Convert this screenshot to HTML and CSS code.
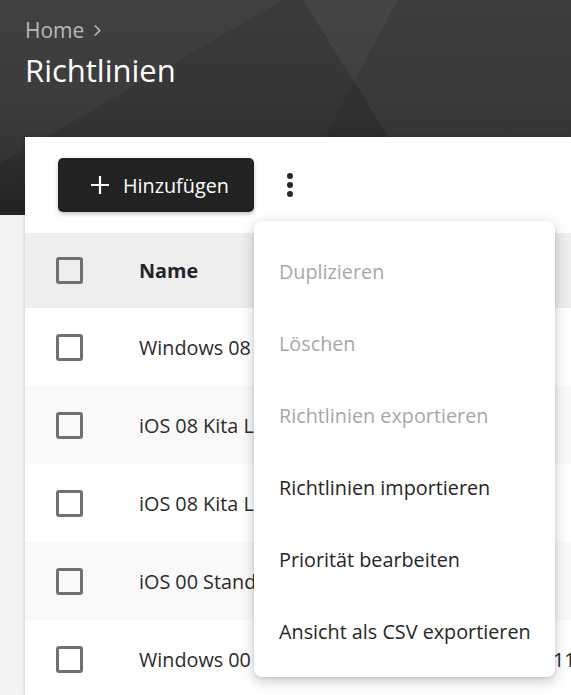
FILE: index.html
```html
<!DOCTYPE html>
<html lang="de">
<head>
<meta charset="utf-8">
<title>Richtlinien</title>
<link rel="stylesheet" href="styles.css">
</head>
<body>
<div class="page">
  <header class="hero">
    <nav class="crumbs"><span>Home</span><svg class="chev" viewBox="0 0 10 14" width="9" height="13"><path d="M2 1.5 L7.5 7 L2 12.5" fill="none" stroke="currentColor" stroke-width="1.8"/></svg></nav>
    <h1 class="title">Richtlinien</h1>
  </header>
  <main class="card">
    <div class="toolbar">
      <button class="btn-add">
        <svg viewBox="0 0 20 20" width="20" height="20"><path d="M10 1 V19 M1 10 H19" stroke="#fff" stroke-width="2.2" fill="none"/></svg>
        <span>Hinzufügen</span>
      </button>
      <button class="kebab" aria-label="Mehr">
        <span class="dot"></span><span class="dot"></span><span class="dot"></span>
      </button>
    </div>
    <div class="table">
      <div class="row head">
        <div class="cell check"><span class="box"></span></div>
        <div class="cell name">Name</div>
        <div class="cell extra"></div>
      </div>
      <div class="row">
        <div class="cell check"><span class="box"></span></div>
        <div class="cell name">Windows 08 Standard</div>
        <div class="cell extra"></div>
      </div>
      <div class="row alt">
        <div class="cell check"><span class="box"></span></div>
        <div class="cell name">iOS 08 Kita Leitung</div>
        <div class="cell extra"></div>
      </div>
      <div class="row">
        <div class="cell check"><span class="box"></span></div>
        <div class="cell name">iOS 08 Kita Lehrer</div>
        <div class="cell extra"></div>
      </div>
      <div class="row alt">
        <div class="cell check"><span class="box"></span></div>
        <div class="cell name">iOS 00 Standard</div>
        <div class="cell extra"></div>
      </div>
      <div class="row">
        <div class="cell check"><span class="box"></span></div>
        <div class="cell name">Windows 00 Standard</div>
        <div class="cell extra">11</div>
      </div>
    </div>
    <ul class="menu">
      <li class="disabled">Duplizieren</li>
      <li class="disabled">Löschen</li>
      <li class="disabled">Richtlinien exportieren</li>
      <li>Richtlinien importieren</li>
      <li>Priorität bearbeiten</li>
      <li>Ansicht als CSV exportieren</li>
    </ul>
  </main>
</div>
</body>
</html>
```
FILE: styles.css
```css
* { box-sizing: border-box; }
html, body { margin: 0; padding: 0; }
body {
  font-family: "Open Sans", "Noto Sans", sans-serif;
  background: #f3f3f3;
  overflow: hidden;
  width: 571px;
  height: 695px;
}
.page {
  height: 695px;
  background:
    linear-gradient(118deg, rgba(0,0,0,0) 0 58%, rgba(0,0,0,0.10) 58% 100%) 0 0 / 100% 215px no-repeat,
    linear-gradient(58deg, rgba(255,255,255,0) 0 62%, rgba(255,255,255,0.05) 62% 100%) 0 0 / 100% 215px no-repeat,
    linear-gradient(150deg, rgba(255,255,255,0.03) 0 30%, rgba(255,255,255,0) 30% 100%) 0 0 / 100% 215px no-repeat,
    linear-gradient(to bottom, #3b3b3b 0, #343434 55%, #232323 215px) 0 0 / 100% 215px no-repeat,
    #f3f3f3;
}
.hero {
  padding: 15px 0 0 25px;
  height: 137px;
}
.crumbs {
  display: flex;
  align-items: center;
  gap: 9px;
  color: #b9b9b9;
  font-size: 21px;
  line-height: 30px;
}
.chev { margin-top: 1px; }
.title {
  margin: 4px 0 0;
  font-weight: 400;
  color: #fff;
  font-size: 31px;
  line-height: 42px;
}
.card {
  position: relative;
  margin-left: 25px;
  background: #fff;
  height: 558px;
  box-shadow: -1px 0 3px rgba(0,0,0,0.12);
}
.toolbar {
  display: flex;
  align-items: center;
  padding: 21px 0 21px 33px;
  gap: 29px;
}
.btn-add {
  display: flex;
  align-items: center;
  gap: 13px;
  height: 54px;
  width: 196px;
  padding: 0 0 0 32px;
  background: #222;
  color: #fff;
  border: none;
  border-radius: 5px;
  font-family: inherit;
  font-size: 19.8px;
  box-shadow: 0 2px 4px rgba(0,0,0,0.25);
}
.kebab {
  display: flex;
  flex-direction: column;
  align-items: center;
  gap: 3px;
  background: none;
  border: none;
  padding: 0 4px;
}
.dot {
  width: 6px; height: 6px;
  border-radius: 50%;
  background: #262626;
}
.table { display: flex; flex-direction: column; }
.row {
  display: grid;
  grid-template-columns: 114px 414px 1fr;
  align-items: center;
  height: 78px;
  color: #2b2b2b;
  font-size: 19.8px;
}
.row.head { height: 75px; background: #eeeeee; font-weight: 700; color: #20252c; }
.row.alt { background: #f9f9f9; }
.cell { white-space: nowrap; overflow: hidden; }
.check { padding-left: 31px; display: flex; }
.box {
  width: 27px; height: 27px;
  border: 3px solid #707070;
  border-radius: 3px;
}
.extra { padding-left: 0; }
.menu {
  position: absolute;
  left: 229px;
  top: 84px;
  width: 301px;
  margin: 0;
  padding: 14px 0 10px;
  list-style: none;
  background: #fff;
  border-radius: 8px;
  box-shadow: 0 4px 14px rgba(0,0,0,0.22), 0 1px 3px rgba(0,0,0,0.1);
}
.menu li {
  height: 72px;
  display: flex;
  align-items: center;
  padding-left: 25px;
  font-size: 19.8px;
  color: #262626;
}
.menu li.disabled { color: #a8a8a8; }
```
